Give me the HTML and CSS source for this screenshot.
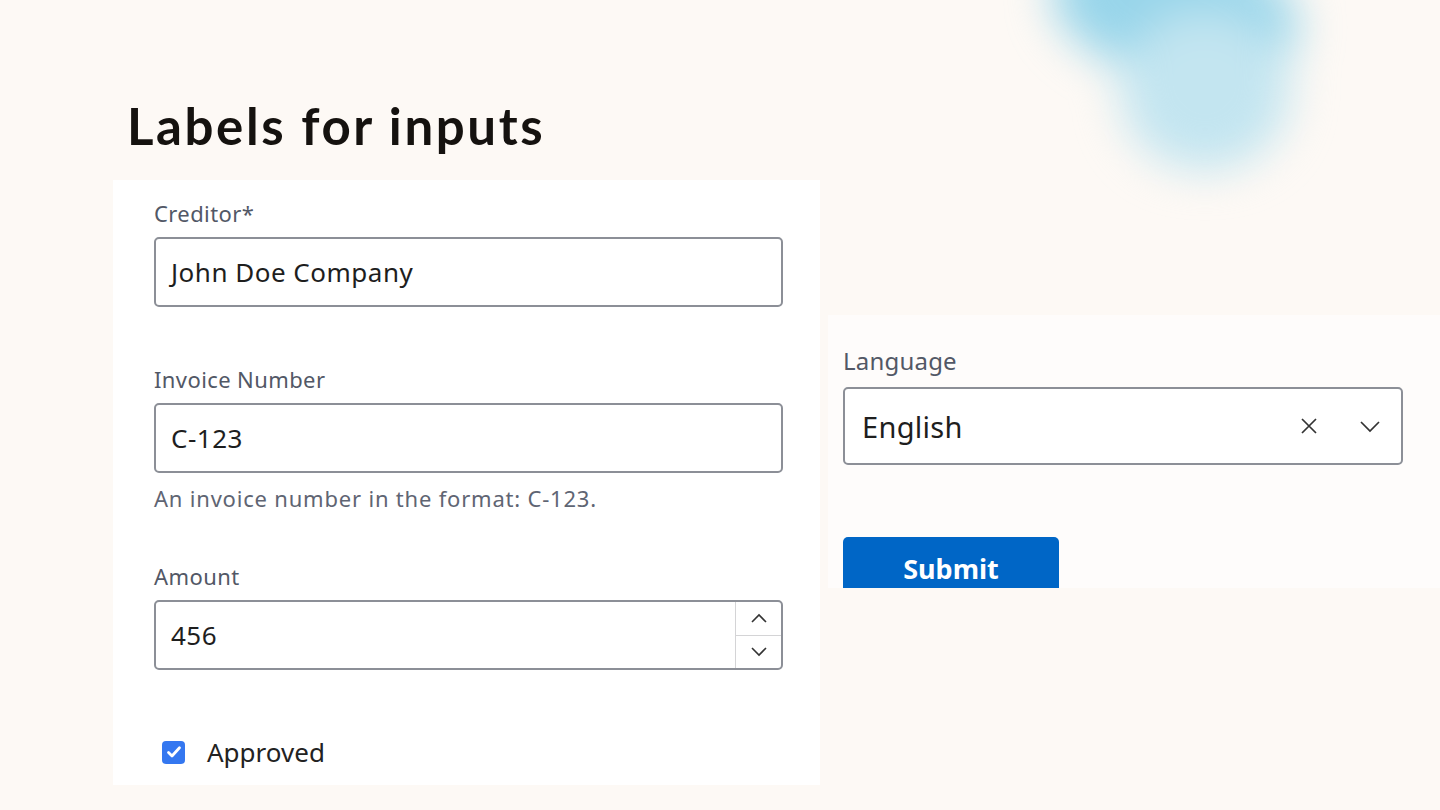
FILE: index.html
```html
<!DOCTYPE html>
<html lang="en">
<head>
<meta charset="utf-8">
<title>Labels for inputs</title>
<link rel="stylesheet" href="styles.css">
</head>
<body>
<div class="blob"><div class="blob-a"></div><div class="blob-b"></div></div>
<header class="title-wrap">
  <h1 class="title">Labels for inputs</h1>
</header>
<main class="stage">
  <section class="panel-left">
    <div class="field">
      <label class="label" for="creditor">Creditor*</label>
      <div class="input"><span class="value">John Doe Company</span></div>
    </div>
    <div class="field field-gap">
      <label class="label" for="inv">Invoice Number</label>
      <div class="input"><span class="value">C-123</span></div>
      <p class="helper">An invoice number in the format: C-123.</p>
    </div>
    <div class="field field-gap2">
      <label class="label" for="amt">Amount</label>
      <div class="input input-num">
        <span class="value">456</span>
        <div class="spinner">
          <div class="spin-btn">
            <svg width="18" height="12" viewBox="0 0 18 12"><path d="M2 10 L9 3 L16 10" fill="none" stroke="#333" stroke-width="1.6"/></svg>
          </div>
          <div class="spin-btn spin-down">
            <svg width="18" height="12" viewBox="0 0 18 12"><path d="M2 2 L9 9 L16 2" fill="none" stroke="#333" stroke-width="1.6"/></svg>
          </div>
        </div>
      </div>
    </div>
    <div class="check-row">
      <span class="checkbox">
        <svg width="16" height="14" viewBox="0 0 16 14"><path d="M2.5 7.5 L6 11 L13.5 2.8" fill="none" stroke="#fff" stroke-width="2.8" stroke-linecap="round" stroke-linejoin="round"/></svg>
      </span>
      <span class="check-label">Approved</span>
    </div>
  </section>
  <section class="panel-right">
    <label class="label label-lg">Language</label>
    <div class="select">
      <span class="value value-lg">English</span>
      <span class="select-icons">
        <svg width="20" height="20" viewBox="0 0 20 20"><path d="M3 3 L17 17 M17 3 L3 17" fill="none" stroke="#333" stroke-width="1.7"/></svg>
        <svg width="22" height="14" viewBox="0 0 22 14"><path d="M2 3 L11 12 L20 3" fill="none" stroke="#333" stroke-width="1.7"/></svg>
      </span>
    </div>
    <div class="submit">Submit</div>
  </section>
</main>
</body>
</html>
```
FILE: styles.css
```css
* { box-sizing: border-box; }
html, body { margin: 0; padding: 0; }
body {
  width: 1440px;
  height: 810px;
  overflow: hidden;
  background: #fdf9f5;
  font-family: "Noto Sans", "IBM Plex Sans", sans-serif;
  position: relative;
}
.blob {
  position: absolute;
  left: 1000px;
  top: -80px;
  width: 400px;
  height: 320px;
  filter: blur(22px);
  pointer-events: none;
}
.blob-a {
  position: absolute;
  left: 50px;
  top: 20px;
  width: 250px;
  height: 140px;
  border-radius: 50%;
  background: #98d5ea;
  transform: rotate(12deg);
}
.blob-b {
  position: absolute;
  left: 120px;
  top: 90px;
  width: 170px;
  height: 160px;
  border-radius: 50%;
  background: #c3e5f0;
}
.title-wrap {
  padding: 96px 0 0 127px;
  height: 180px;
}
.title {
  margin: 0;
  font-family: "Lato", sans-serif;
  font-weight: 700;
  font-size: 51px;
  line-height: 60px;
  color: #15120f;
  letter-spacing: 2.6px;
}
.stage {
  display: flex;
  align-items: flex-start;
  padding-left: 113px;
}
.panel-left {
  width: 707px;
  height: 605px;
  background: #ffffff;
  padding: 19px 37px 0 41px;
  display: flex;
  flex-direction: column;
}
.field { display: flex; flex-direction: column; }
.field-gap { margin-top: 58px; }
.field-gap2 { margin-top: 50px; }
.label {
  font-size: 22px;
  line-height: 28px;
  color: #525866;
  margin-bottom: 10px;
  letter-spacing: 0.4px;
}
.input {
  height: 70px;
  flex-shrink: 0;
  border: 2px solid #8c8f97;
  border-radius: 5px;
  display: flex;
  align-items: center;
  padding-left: 15px;
  background: #fff;
}
.value {
  font-size: 26px;
  color: #1e1e1e;
  letter-spacing: 0.5px;
}
.helper {
  margin: 11px 0 0;
  font-size: 22px;
  line-height: 28px;
  color: #5f6573;
  letter-spacing: 0.8px;
}
.input-num { padding-right: 0; }
.input-num .value { flex: 1; }
.spinner {
  width: 46px;
  height: 100%;
  border-left: 1px solid #d4d4d6;
  display: flex;
  flex-direction: column;
}
.spin-btn {
  flex: 1;
  display: flex;
  align-items: center;
  justify-content: center;
}
.spin-down { border-top: 1px solid #d4d4d6; }
.check-row {
  margin-top: 67px;
  height: 30px;
  display: flex;
  align-items: center;
  padding-left: 8px;
}
.checkbox {
  width: 23px;
  height: 23px;
  border-radius: 4px;
  background: #3477f0;
  display: flex;
  align-items: center;
  justify-content: center;
}
.check-label {
  margin-left: 22px;
  font-size: 26px;
  color: #222;
}
.panel-right {
  margin-top: 135px;
  margin-left: 8px;
  flex: 1;
  height: 273px;
  background: #fefcfb;
  padding: 30px 37px 0 15px;
  overflow: hidden;
  display: flex;
  flex-direction: column;
  align-items: stretch;
}
.label-lg {
  font-size: 24px;
  line-height: 32px;
  margin-bottom: 10px;
  letter-spacing: 0.2px;
  flex-shrink: 0;
}
.select {
  height: 78px;
  flex-shrink: 0;
  border: 2px solid #8c8f97;
  border-radius: 5px;
  display: flex;
  align-items: center;
  padding: 0 20px 0 17px;
  background: #fff;
}
.value-lg { font-size: 29px; flex: 1; letter-spacing: 0.3px; }
.select-icons {
  display: flex;
  align-items: center;
  gap: 40px;
}
.submit {
  margin-top: 72px;
  width: 216px;
  height: 51px;
  flex-shrink: 0;
  align-self: flex-start;
  border-radius: 5px 5px 0 0;
  background: #0066c6;
  color: #fff;
  font-weight: 700;
  font-size: 27px;
  line-height: 26px;
  padding: 19px 0 0;
  text-align: center;
}
```
